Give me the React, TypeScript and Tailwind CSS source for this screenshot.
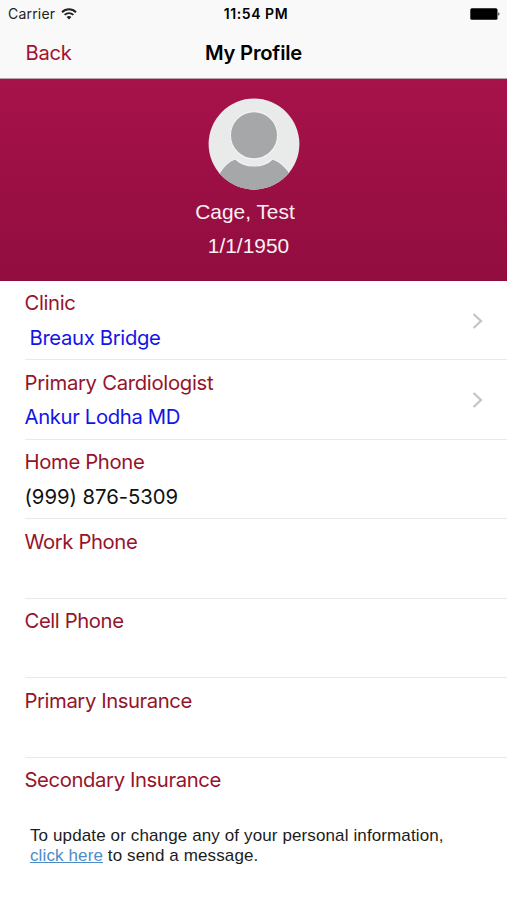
import { clsx } from 'clsx';

type Field = {
    label: string;
    value?: string;
    labelClass: string;
    valueClass?: string;
    link?: boolean;
};

const fields: Field[] = [
    { label: 'Clinic', value: 'Breaux Bridge', labelClass: 'tracking-[-0.35px]', valueClass: 'pl-[5px] text-[#1414e6] tracking-[-0.35px]', link: true },
    { label: 'Primary Cardiologist', value: 'Ankur Lodha MD', labelClass: 'tracking-[-0.3px]', valueClass: 'text-[#1414e6] tracking-[-0.36px]', link: true },
    { label: 'Home Phone', value: '(999) 876-5309', labelClass: 'tracking-[-0.36px]', valueClass: 'text-[#111] tracking-[-0.03px]' },
    { label: 'Work Phone', labelClass: 'tracking-[-0.4px]' },
    { label: 'Cell Phone', labelClass: 'tracking-[-0.4px]' },
    { label: 'Primary Insurance', labelClass: 'tracking-[-0.42px]' },
];

function WifiIcon() {
    return (
        <svg width="16" height="12" viewBox="0 0 16 12" fill="none" stroke="#222" strokeWidth="1.9">
            <path d="M1 4.2C5 0.3 11 0.3 15 4.2" />
            <path d="M3.6 6.9C6.1 4.5 9.9 4.5 12.4 6.9" />
            <path d="M8 11.5L5.6 9C7 7.8 9 7.8 10.4 9Z" fill="#222" stroke="none" />
        </svg>
    );
}

function BatteryIcon() {
    return (
        <svg width="30" height="12" viewBox="0 0 30 12">
            <rect x="0.3" y="0.2" width="27.2" height="11.6" rx="1.6" fill="#000" />
            <path d="M28.3 4.2C29.9 4.8 29.9 7.2 28.3 7.8Z" fill="#333" />
        </svg>
    );
}

function Avatar() {
    return (
        <svg width="92" height="92" viewBox="0 0 92 92">
            <defs>
                <clipPath id="avatar">
                    <circle cx="46" cy="46" r="45.4" />
                </clipPath>
            </defs>
            <g clipPath="url(#avatar)">
                <rect width="92" height="92" fill="#e9eaea" />
                <path
                    d="M10 77C15 69 20 63 27.5 61C37 70.3 55 70.3 64.5 61C72 63.5 78 69 83 77V92H10Z"
                    fill="#a5a7a8"
                    stroke="#f3f3f3"
                    strokeWidth="1.2"
                />
                <circle cx="46" cy="37.3" r="23.6" fill="#a5a7a8" stroke="#f3f3f3" strokeWidth="1.2" />
            </g>
        </svg>
    );
}

function Chevron() {
    return (
        <svg width="12" height="18" viewBox="0 0 12 18" fill="none" stroke="#c4c4c8" strokeWidth="2.2">
            <path d="M1.5 2L9 9L1.5 16" />
        </svg>
    );
}

function Row({ label, value, labelClass, valueClass, link }: Field) {
    return (
        <li className="ml-[24.5px] flex h-[79.5px] justify-between border-b border-[#e9e9eb] pr-[23px]">
            <div className="pt-[5.5px] text-[20.3px]">
                <p className={clsx('h-[34.7px] leading-[34px] text-[#95142b]', labelClass)}>{label}</p>
                <p className={clsx('leading-[34px]', valueClass)}>{value}</p>
            </div>
            {link && (
                <div className="pt-[31px]">
                    <Chevron />
                </div>
            )}
        </li>
    );
}

export default function App() {
    return (
        <div className="h-[900px] w-full overflow-hidden bg-white font-['Inter',sans-serif]">
            <header className="h-[79px] border-b border-[#b9a4ac] bg-[#f9f9f9]">
                <div className="grid h-7 grid-cols-3 items-center pl-2 pr-[7px] text-[14px] leading-7 text-[#222]">
                    <div className="flex items-center gap-[6px]">
                        <span className="tracking-[0.2px]">Carrier</span>
                        <WifiIcon />
                    </div>
                    <span className="pl-1 text-center text-[14px] font-semibold tracking-[0.55px] text-black">11:54 PM</span>
                    <div className="flex justify-end">
                        <BatteryIcon />
                    </div>
                </div>
                <div className="grid h-[50px] grid-cols-3 items-center text-[20.2px]">
                    <a className="pl-[25.5px] tracking-[-0.3px] text-[#a3122f]">Back</a>
                    <h1 className="text-center font-semibold tracking-[-0.2px] text-black">My Profile</h1>
                </div>
            </header>

            <section className="flex h-[201.5px] flex-col items-center bg-linear-to-b from-[#a6124a] to-[#920d3f] pt-[19px] font-['Liberation_Sans',sans-serif] text-[20.9px] text-[#fbeef3]">
                <Avatar />
                <p className="mt-[4.5px] h-[34px] pr-[17px] leading-[34px]">Cage, Test</p>
                <p className="pr-[10px] leading-[34px]">1/1/1950</p>
            </section>

            <ul>
                {fields.map((field) => (
                    <Row key={field.label} {...field} />
                ))}
            </ul>

            <footer className="pl-[24.5px] pt-[5px]">
                <p className="text-[20.3px] leading-[34px] tracking-[-0.4px] text-[#95142b]">Secondary Insurance</p>
                <p className="mt-[29.5px] pl-[5.5px] font-['Liberation_Sans',sans-serif] text-[17px] leading-5 tracking-[0.12px] text-[#1c1c1c]">
                    To update or change any of your personal information,
                    <br />
                    <a className="text-[#4d8bc9] underline">click here</a> to send a message.
                </p>
            </footer>
        </div>
    );
}
